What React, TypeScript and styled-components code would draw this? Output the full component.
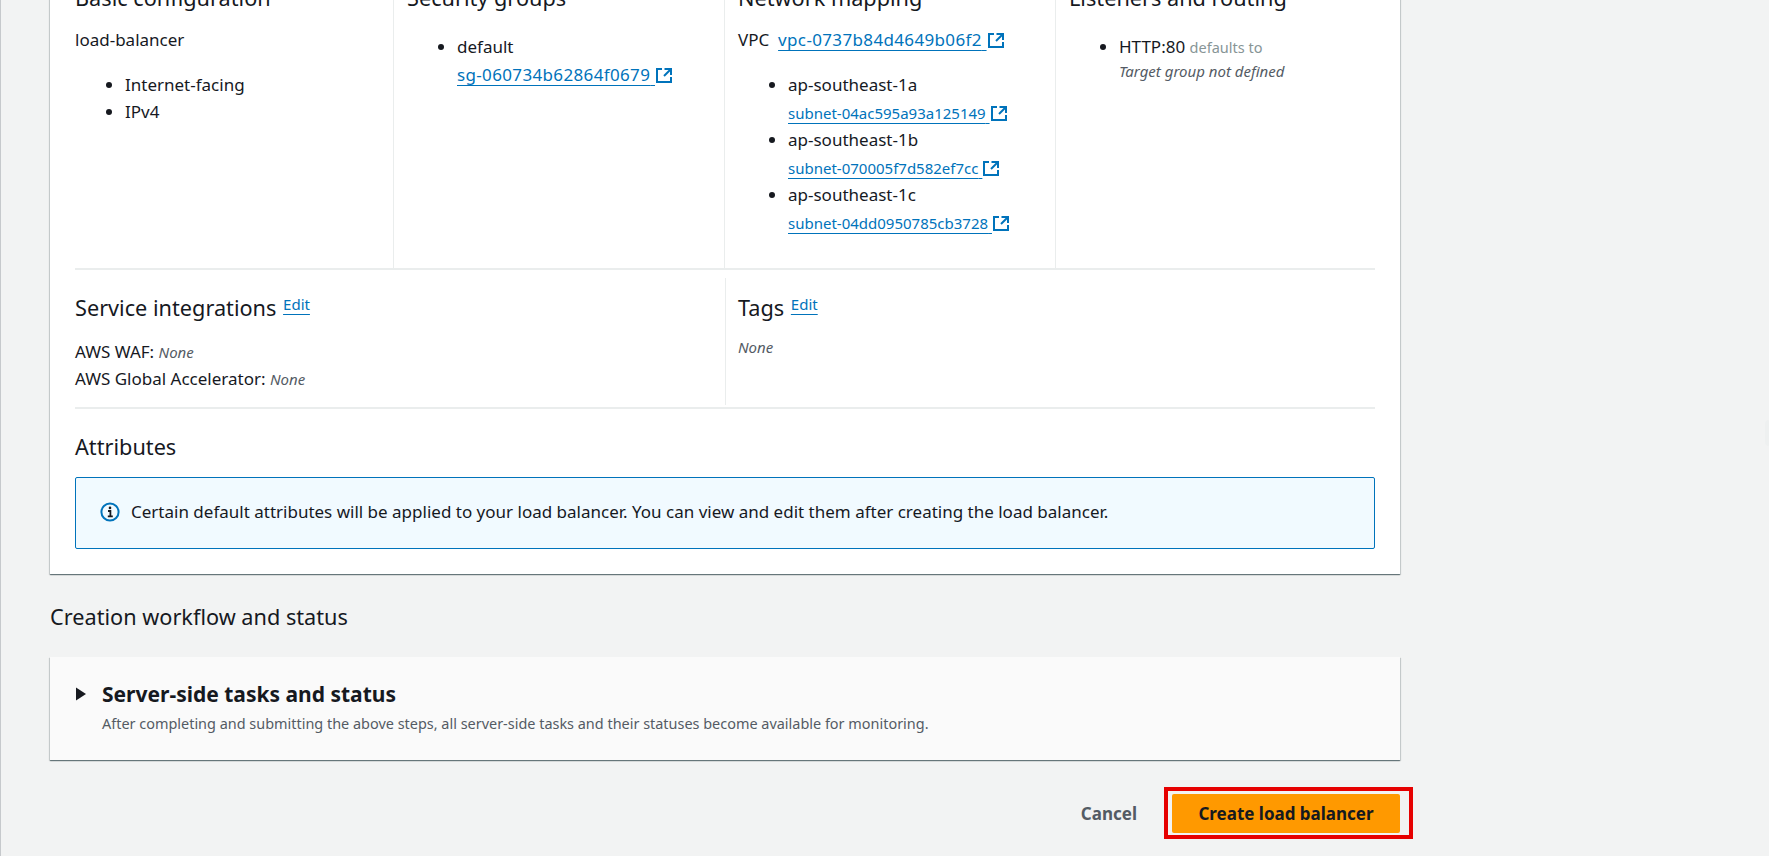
import styled, { createGlobalStyle } from 'styled-components'

const GlobalStyle = createGlobalStyle`
  html, body {
    margin: 0;
    padding: 0;
    height: 100%;
    overflow: hidden;
    background: #f2f3f3;
  }
  body {
    font-family: "Noto Sans", "Open Sans", sans-serif;
    font-size: 17px;
    line-height: 24px;
    color: #16191f;
  }
`

const ExternalIcon = () => (
  <IconSvg viewBox="0 0 18 17" aria-hidden="true">
    <path d="M16 8V2H9.5" />
    <path d="M16 2 9 9" />
    <path d="M7 2H2v13h14v-5" />
  </IconSvg>
)

const InfoIcon = () => (
  <AlertIcon viewBox="0 0 20 20" aria-hidden="true">
    <circle cx="10" cy="10" r="8.6" fill="none" stroke="#0073bb" strokeWidth="2" />
    <circle cx="10" cy="5.9" r="1.3" fill="#16191f" />
    <path d="M8 9h2.4v5.2M7.8 14.4h5" fill="none" stroke="#16191f" strokeWidth="1.8" />
  </AlertIcon>
)

const ExternalLink = ({ id, small }: { id: string; small?: boolean }) => (
  <LinkRow>
    <ResourceLink $small={small} href="#">
      {id}{' '}
    </ResourceLink>
    <ExternalIcon />
  </LinkRow>
)

const subnets = [
  { zone: 'ap-southeast-1a', id: 'subnet-04ac595a93a125149' },
  { zone: 'ap-southeast-1b', id: 'subnet-070005f7d582ef7cc' },
  { zone: 'ap-southeast-1c', id: 'subnet-04dd0950785cb3728' }
]

export default function App() {
  return (
    <Page>
      <GlobalStyle />
      <Content>
        <Card>
          <SummaryGrid>
            <Column>
              <SectionTitle>
                Basic configuration <HiddenEdit />
              </SectionTitle>
              <Value>load-balancer</Value>
              <ValueList>
                <li>Internet-facing</li>
                <li>IPv4</li>
              </ValueList>
            </Column>
            <Column>
              <SectionTitle>
                Security groups <HiddenEdit />
              </SectionTitle>
              <TightList>
                <li>
                  default
                  <SubLine>
                    <ExternalLink id="sg-060734b62864f0679" />
                  </SubLine>
                </li>
              </TightList>
            </Column>
            <Column>
              <SectionTitle>
                Network mapping <HiddenEdit />
              </SectionTitle>
              <Value>
                VPC&nbsp; <ExternalLink id="vpc-0737b84d4649b06f2" />
              </Value>
              <ValueList>
                {subnets.map((subnet) => (
                  <li key={subnet.id}>
                    {subnet.zone}
                    <SubLine>
                      <ExternalLink id={subnet.id} small />
                    </SubLine>
                  </li>
                ))}
              </ValueList>
            </Column>
            <Column>
              <SectionTitle>
                Listeners and routing <HiddenEdit />
              </SectionTitle>
              <TightList>
                <li>
                  HTTP:80 <Muted>defaults to</Muted>
                  <Note>Target group not defined</Note>
                </li>
              </TightList>
            </Column>
          </SummaryGrid>
          <Divider />
          <SecondGrid>
            <SecondColumn>
              <SectionTitle>
                Service integrations <EditLink href="#">Edit</EditLink>
              </SectionTitle>
              <PlainLine>
                AWS WAF: <None>None</None>
              </PlainLine>
              <PlainLine>
                AWS Global Accelerator: <None>None</None>
              </PlainLine>
            </SecondColumn>
            <SecondColumn $right>
              <SectionTitle>
                Tags <EditLink href="#">Edit</EditLink>
              </SectionTitle>
              <TagsNone>None</TagsNone>
            </SecondColumn>
          </SecondGrid>
          <Divider />
          <AttributesTitle>Attributes</AttributesTitle>
          <Alert>
            <InfoIcon />
            Certain default attributes will be applied to your load balancer. You can view and edit
            them after creating the load balancer.
          </Alert>
        </Card>

        <WorkflowTitle>Creation workflow and status</WorkflowTitle>

        <StatusCard>
          <StatusHead>
            <Caret viewBox="0 0 12 14" aria-hidden="true">
              <path d="M1 0.5 11 7 1 13.5z" />
            </Caret>
            <StatusTitle>Server-side tasks and status</StatusTitle>
          </StatusHead>
          <StatusText>
            After completing and submitting the above steps, all server-side tasks and their
            statuses become available for monitoring.
          </StatusText>
        </StatusCard>

        <Actions>
          <CancelButton>Cancel</CancelButton>
          <Highlight>
            <PrimaryButton>Create load balancer</PrimaryButton>
          </Highlight>
        </Actions>
      </Content>
      <EdgeHandle />
    </Page>
  )
}

const Page = styled.div`
  position: relative;
  height: 856px;
  overflow: hidden;
  border-left: 1px solid #c6c9cc;
  background: #f2f3f3;
`

const Content = styled.div`
  width: 1350px;
  margin-left: 49px;
  margin-top: -15px;
`

const Card = styled.section`
  background: #fff;
  padding: 0 25px 25px;
  height: 589px;
  box-sizing: border-box;
  box-shadow: 0 1px 1px 0 rgba(0, 28, 36, 0.45), 1px 1px 1px 0 rgba(0, 28, 36, 0.12),
    -1px 1px 1px 0 rgba(0, 28, 36, 0.12);
`

const SummaryGrid = styled.div`
  display: grid;
  grid-template-columns: 319px 331px 331px 1fr;
  height: 283px;
`

const Column = styled.div`
  padding-left: 13px;
  border-right: 1px solid #eaeded;

  &:first-child {
    padding-left: 0;
  }
  &:last-child {
    border-right: 0;
  }
`

const SectionTitle = styled.h2`
  margin: 0 0 17px;
  font-size: 21.7px;
  line-height: 26px;
  font-weight: 400;
  white-space: nowrap;
`

const HiddenEdit = styled.span`
  display: inline-block;
  width: 26px;
  margin-left: 1px;
  height: 9px;
  vertical-align: 6px;
  border-bottom: 1px solid #0073bb;
`

const EditLink = styled.a`
  font-size: 15px;
  line-height: 20px;
  margin-left: 1px;
  vertical-align: 6px;
  color: #0073bb;
  text-decoration: underline;
  text-underline-offset: 4px;
  text-decoration-thickness: 1px;
`

const Value = styled.div`
  height: 24px;
  white-space: nowrap;
`

const ValueList = styled.ul`
  margin: 21px 0 0;
  padding: 0 0 0 50px;

  li {
    margin-bottom: 3px;
  }
`

const TightList = styled.ul`
  margin: 24px 0 0;
  padding: 0 0 0 50px;
`

const SubLine = styled.div`
  height: 24px;
  margin-top: 4px;
  white-space: nowrap;
`

const LinkRow = styled.span`
  white-space: nowrap;
`

const ResourceLink = styled.a<{ $small?: boolean }>`
  color: #0073bb;
  white-space: pre;
  font-size: ${(p) => (p.$small ? '15px' : '17px')};
  letter-spacing: ${(p) => (p.$small ? '0' : '0.35px')};
  text-decoration: underline;
  text-decoration-thickness: 1px;
  text-underline-offset: 4px;
`

const IconSvg = styled.svg`
  width: 18px;
  height: 17px;
  vertical-align: -3px;
  fill: none;
  stroke: #0073bb;
  stroke-width: 2;
`

const Muted = styled.span`
  font-size: 14.5px;
  color: #879596;
`

const Note = styled.div`
  margin-top: 2px;
  font-size: 15px;
  line-height: 20px;
  font-style: italic;
  color: #545b64;
`

const Divider = styled.div`
  height: 2px;
  background: #eaeded;
`

const SecondGrid = styled.div`
  display: grid;
  grid-template-columns: 650px 1fr;
  height: 137px;
  padding-top: 8px;
  box-sizing: border-box;
`

const SecondColumn = styled.div<{ $right?: boolean }>`
  height: 127px;
  padding-top: 16px;
  box-sizing: border-box;
  ${(p) => (p.$right ? 'padding-left: 12px; border-left: 1px solid #eaeded;' : '')}

  ${SectionTitle} {
    margin-bottom: 19px;
  }
`

const PlainLine = styled.div`
  height: 27px;
`

const None = styled.span`
  font-size: 15px;
  font-style: italic;
  color: #545b64;
`

const TagsNone = styled(None)`
  display: block;
  line-height: 20px;
  margin-top: -3px;
`

const AttributesTitle = styled.h2`
  margin: 25px 0 17px;
  font-size: 21.7px;
  line-height: 26px;
  font-weight: 400;
`

const Alert = styled.div`
  display: flex;
  align-items: center;
  height: 72px;
  box-sizing: border-box;
  padding: 0 24px 3px;
  gap: 11px;
  border: 1px solid #0073bb;
  border-radius: 2px;
  background: #f1faff;
`

const AlertIcon = styled.svg`
  width: 20px;
  height: 20px;
  flex: none;
`

const WorkflowTitle = styled.h2`
  margin: 30px 0 27px;
  font-size: 21.7px;
  line-height: 26px;
  font-weight: 400;
`

const StatusCard = styled.section`
  height: 103px;
  box-sizing: border-box;
  padding: 24px 25px 0;
  background: #fafafa;
  box-shadow: 0 1px 1px 0 rgba(0, 28, 36, 0.45), 1px 1px 1px 0 rgba(0, 28, 36, 0.12),
    -1px 1px 1px 0 rgba(0, 28, 36, 0.12);
`

const StatusHead = styled.div`
  display: flex;
  align-items: center;
  gap: 15px;
`

const Caret = styled.svg`
  width: 12px;
  height: 14px;
  fill: #16191f;
  flex: none;
`

const StatusTitle = styled.h3`
  margin: 0;
  font-size: 21px;
  line-height: 26px;
  font-weight: 700;
`

const StatusText = styled.p`
  margin: 6px 0 0 27px;
  font-size: 14.45px;
  line-height: 22px;
  color: #545b64;
`

const Actions = styled.div`
  display: flex;
  justify-content: flex-end;
  align-items: center;
  gap: 27px;
  margin-top: 27px;
  margin-right: -13px;
`

const CancelButton = styled.span`
  padding-top: 1px;
  font-size: 17px;
  font-weight: 700;
  color: #545b64;
`

const Highlight = styled.div`
  padding: 3px 9px 2px 4px;
  border: 4px solid #e60000;
`

const PrimaryButton = styled.button`
  display: block;
  width: 228px;
  height: 39px;
  padding: 0;
  border: 0;
  border-radius: 2px;
  background: #ff9900;
  font-family: inherit;
  font-size: 17px;
  font-weight: 700;
  color: #16191f;
`

const EdgeHandle = styled.div`
  position: absolute;
  right: 0;
  top: 420px;
  width: 4px;
  height: 26px;
  border-radius: 4px 0 0 4px;
  background: #eef0f0;
`
